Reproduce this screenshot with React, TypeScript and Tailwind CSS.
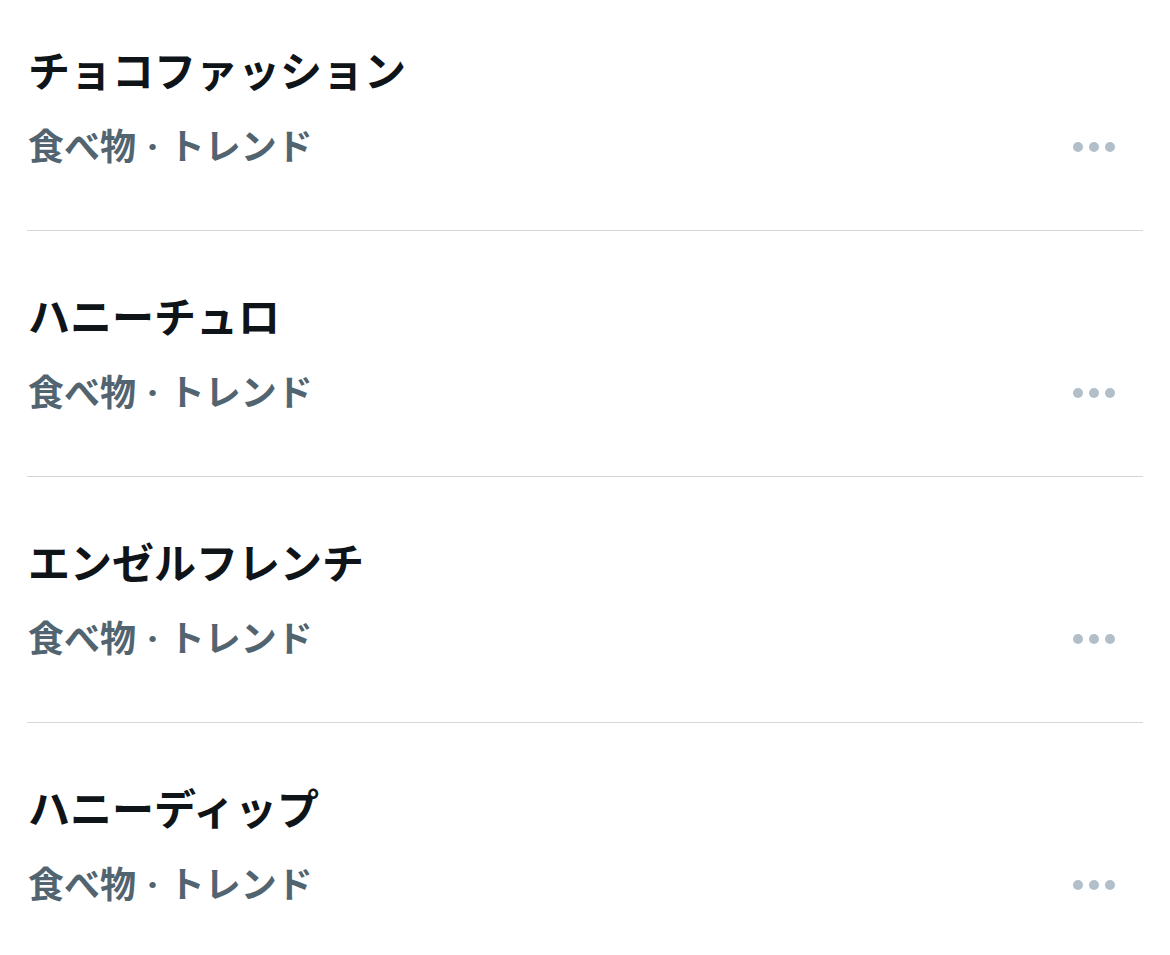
import React from "react";

const items = ["チョコファッション", "ハニーチュロ", "エンゼルフレンチ", "ハニーディップ"];

function Dots() {
  return (
    <svg width="44" height="12" viewBox="0 0 44 12" className="block mt-[2px]">
      <circle cx="6" cy="6" r="5" fill="#b3bfc8" />
      <circle cx="22" cy="6" r="5" fill="#b3bfc8" />
      <circle cx="38" cy="6" r="5" fill="#b3bfc8" />
    </svg>
  );
}

export default function App() {
  return (
    <div
      className="w-[1170px] h-[955px] bg-white overflow-hidden"
      style={{ fontFamily: '"Noto Sans CJK JP", "Noto Sans", sans-serif' }}
    >
      <div className="mx-[27px] -mt-[15px]">
        {items.map((t, i) => (
          <div key={i} className="h-[246px] border-b border-[#d6d6d6] pl-[1px] pr-[27px] pt-[59px]">
            <div className="text-[42px] leading-[50px] font-bold text-[#0f1419]">{t}</div>
            <div className="mt-[28px] flex items-center justify-between">
              <div className="text-[36px] leading-[44px] font-bold text-[#536471]">
                食べ物
                <span className="mx-[2px]" style={{ fontFamily: '"Noto Sans", sans-serif' }}> · </span>
                トレンド
              </div>
              <Dots />
            </div>
          </div>
        ))}
      </div>
    </div>
  );
}
